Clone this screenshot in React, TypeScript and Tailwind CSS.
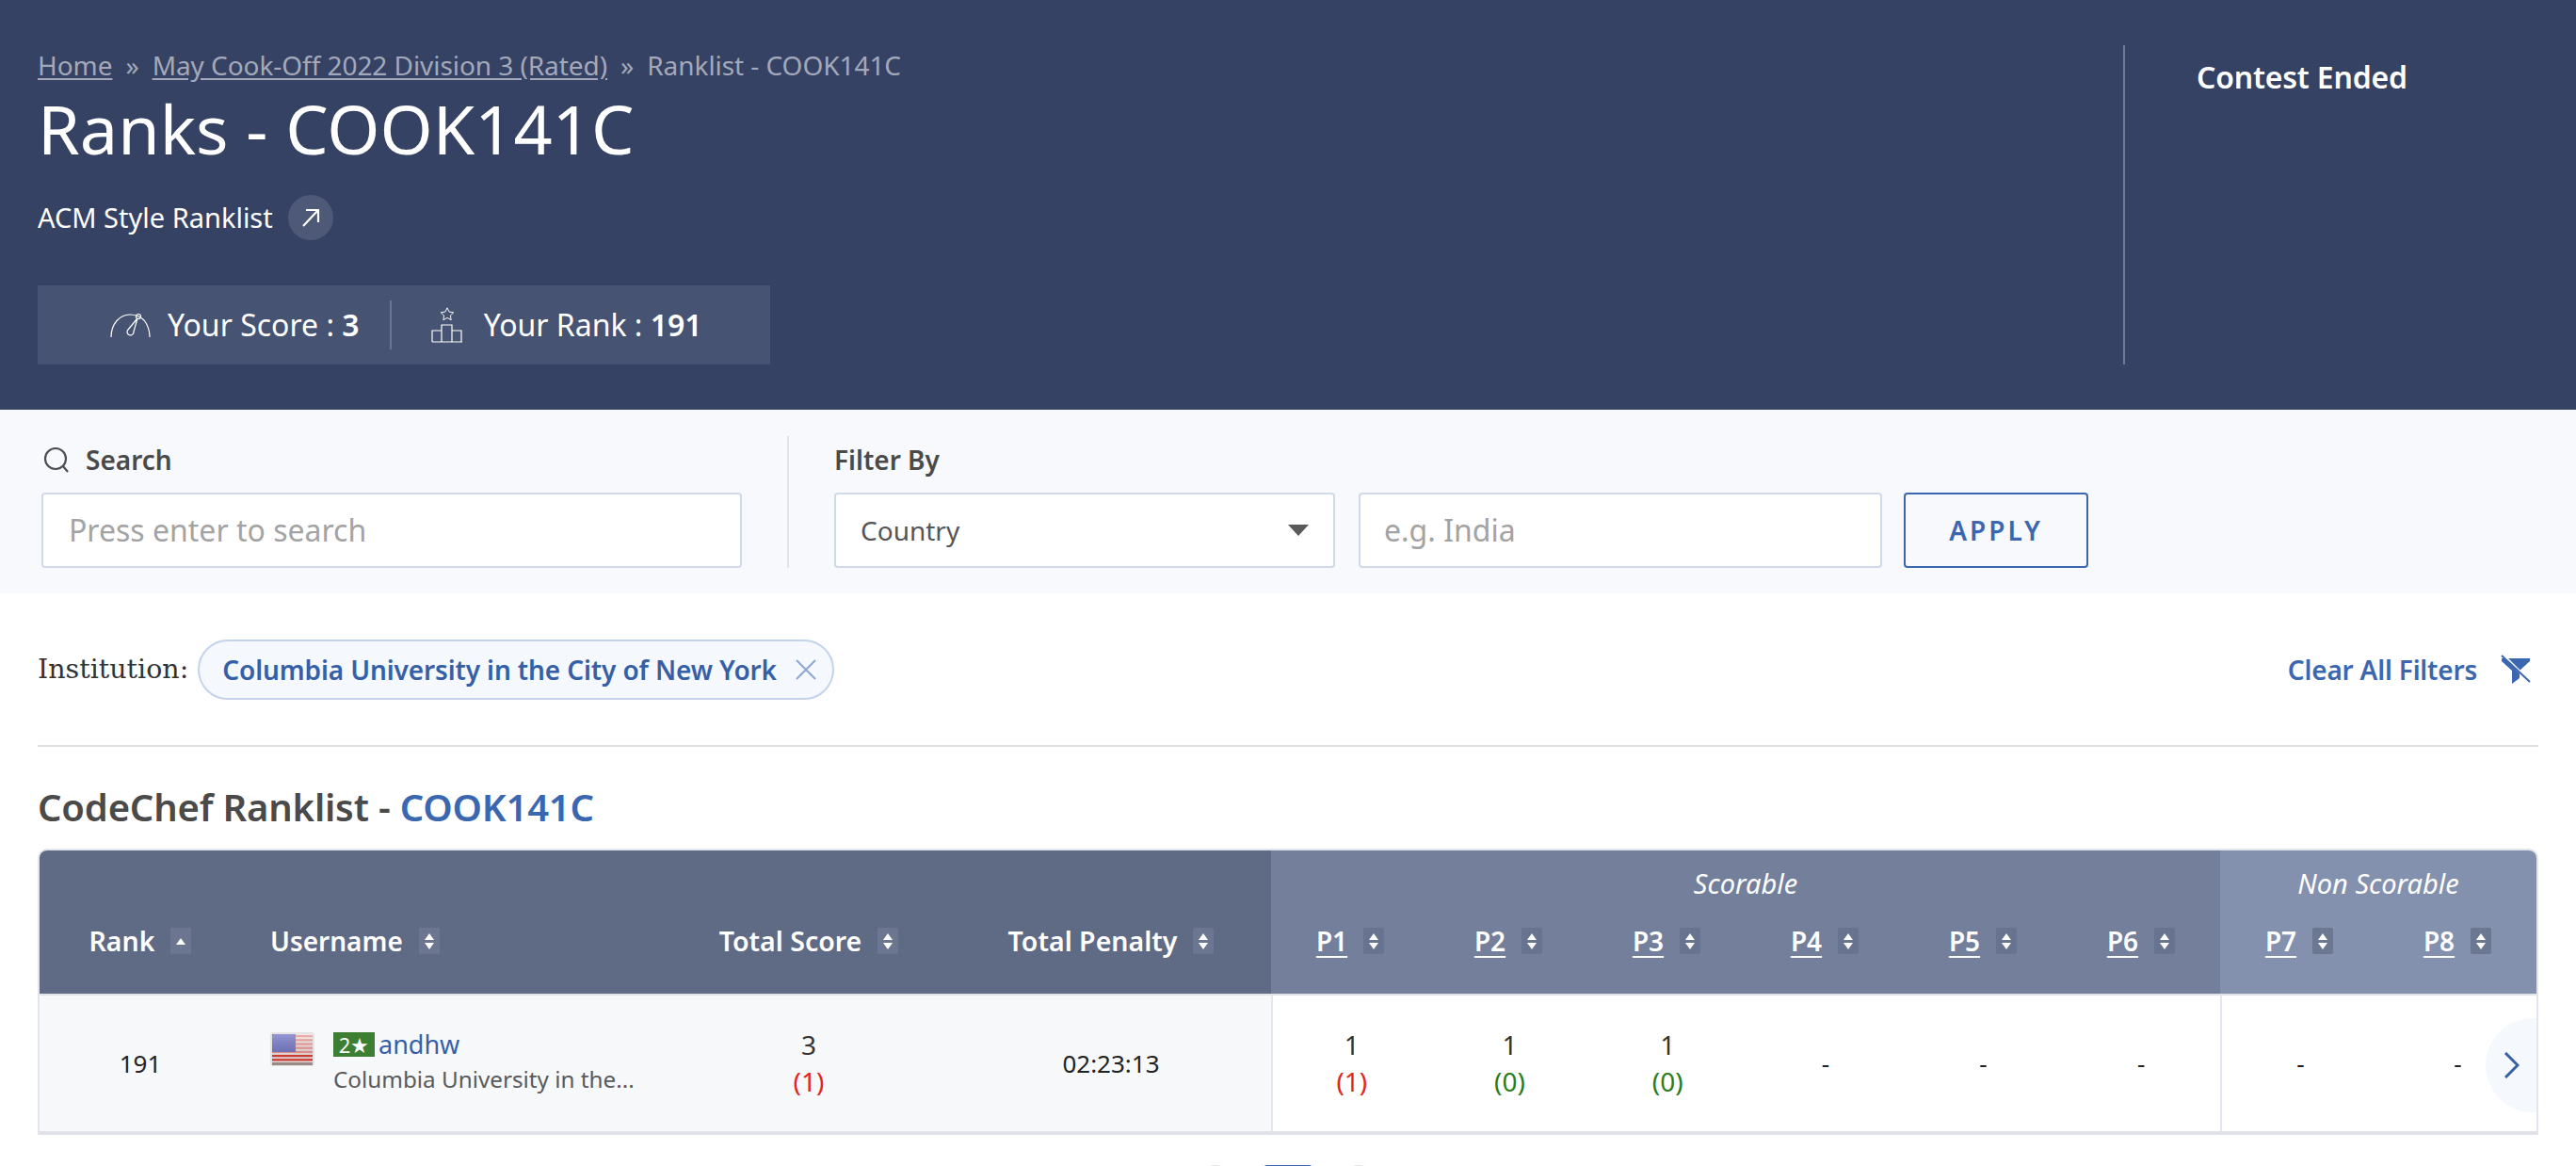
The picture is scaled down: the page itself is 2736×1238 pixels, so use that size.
import React from "react";

function Sort({ only, cls }: { only?: boolean; cls: string }) {
  return (
    <span className={`flex h-[28px] w-[22px] shrink-0 flex-col items-center justify-center gap-[3px] rounded-[2px] ${cls}`}>
      <svg width="10" height="7" viewBox="0 0 10 7" className="fill-white"><path d="M5 0 10 7H0Z" /></svg>
      {!only && <svg width="10" height="7" viewBox="0 0 10 7" className="fill-white"><path d="M5 7 0 0H10Z" /></svg>}
    </span>
  );
}

function MainHead({ label, only, cls }: { label: string; only?: boolean; cls: string }) {
  return (
    <div className={`flex items-center justify-center gap-[17px] text-[28.5px] font-semibold leading-[40px] text-white ${cls}`}>
      <span>{label}</span>
      <Sort only={only} cls="bg-[#6c7690]" />
    </div>
  );
}

function PHead({ label, box }: { label: string; box: string }) {
  return (
    <div className="flex w-[168px] items-center justify-center gap-[17px] text-[28px] font-semibold leading-[40px] text-white">
      <span className="underline decoration-2 underline-offset-[5px]">{label}</span>
      <Sort cls={box} />
    </div>
  );
}

function Cell({ top, bottom, color }: { top: string; bottom?: string; color?: string }) {
  return (
    <div className="flex w-[168px] flex-col items-center justify-center text-[28px] text-[#333]">
      {bottom ? (
        <>
          <span className="leading-[38px]">{top}</span>
          <span className={`leading-[40px] ${color}`}>{bottom}</span>
        </>
      ) : (
        <span className="text-[26px] text-[#222]">{top}</span>
      )}
    </div>
  );
}

function Flag() {
  const stripes = [0, 1, 2, 3, 4, 5, 6];
  return (
    <svg width="47" height="36" viewBox="0 0 47 36" className="shrink-0">
      <defs>
        <linearGradient id="g" x1="0" y1="0" x2="0" y2="1">
          <stop offset="0" stopColor="#fff" stopOpacity="0.25" />
          <stop offset="1" stopColor="#000" stopOpacity="0.08" />
        </linearGradient>
      </defs>
      <rect x="0" y="0" width="47" height="36" rx="3" fill="#e4e4e4" />
      <rect x="2" y="2" width="43" height="30" rx="2" fill="#f3e4e2" />
      {stripes.map((i) => (
        <rect key={i} x="2" y={3 + i * 4.2} width="43" height="2.2" fill={i > 4 ? "#dd3d33" : "#ee9590"} />
      ))}
      <rect x="2" y="2" width="25" height="19" fill="#7376c6" />
      <rect x="2" y="2" width="43" height="30" rx="2" fill="url(#g)" />
      <rect x="2" y="32" width="43" height="3" fill="#9a8a88" />
    </svg>
  );
}

export default function App() {
  return (
    <div className="h-[1238px] w-[2736px] overflow-hidden bg-white font-['Noto_Sans',sans-serif] text-[#333]">
      {/* hero */}
      <div className="flex h-[435px] bg-[#364263] pl-[40px] pt-[48px]">
        <div className="w-[2215px] shrink-0">
          <div className="flex h-[42px] items-center text-[28px] leading-[42px] tracking-[-0.06px] text-[#a3a9ba]">
            <span className="underline underline-offset-[3px]">Home</span>
            <span className="mx-[14px]">»</span>
            <span className="underline underline-offset-[3px]">May Cook-Off 2022 Division 3 (Rated)</span>
            <span className="mx-[14px]">»</span>
            <span>Ranklist - COOK141C</span>
          </div>
          <h1 className="text-[72px] leading-[92px] text-white">Ranks - COOK141C</h1>
          <div className="mt-[25px] flex h-[48px] items-center gap-[16px] text-[29px] text-white">
            <span>ACM Style Ranklist</span>
            <span className="flex h-[48px] w-[48px] items-center justify-center rounded-full bg-[#4d5977]">
              <svg width="24" height="24" viewBox="0 0 24 24" fill="none" stroke="white" strokeWidth="2.2"><path d="M4 21 20 4M7 4h13v13" /></svg>
            </span>
          </div>
          <div className="mt-[48px] flex h-[84px] w-[778px] items-center bg-[#475373] pl-[76px] text-[32px] text-white">
            <svg width="44" height="30" viewBox="0 0 44 30" fill="none" stroke="white" strokeWidth="1.2" className="mr-[18px]">
              <path d="M2 28C2 14 11 4 22 4c6 0 11 2 15 6 4 5 6 11 6 18" />
              <circle cx="31" cy="6" r="2.5" />
              <path d="M30 8 26 22a3.5 3.5 0 1 1-6-2Z" />
            </svg>
            <span>Your Score : <span className="font-semibold">3</span></span>
            <span className="ml-[32px] h-[52px] w-[2px] bg-[#6b7690]" />
            <svg width="34" height="38" viewBox="0 0 34 38" fill="none" stroke="white" strokeWidth="1.2" className="ml-[42px] mr-[22px]">
              <path d="M17 1l2.6 5.4 5.9.8-4.3 4.1 1 5.8-5.2-2.8-5.2 2.8 1-5.8-4.3-4.1 5.9-.8Z" transform="translate(3.4 0) scale(.8)" />
              <path d="M11 37V19h11v18M1 37V25h10M22 25h10v12M1 37h32" />
            </svg>
            <span>Your Rank : <span className="font-semibold">191</span></span>
          </div>
        </div>
        <div className="h-[339px] w-[2px] bg-[#6f7a94]" />
        <div className="pl-[76px] text-[32px] font-semibold leading-[68px] tracking-[-0.2px] text-white">Contest Ended</div>
      </div>

      {/* filters */}
      <div className="flex h-[195px] bg-[#f7f9fc] pl-[44px] pt-[33px]">
        <div className="w-[744px]">
          <div className="flex h-[40px] items-center gap-[17px] pl-[2px] text-[28px] font-semibold text-[#4a4a4a]">
            <svg width="28" height="28" viewBox="0 0 28 28" fill="none" stroke="#4f4f4f" strokeWidth="2.2"><circle cx="13" cy="13" r="11" /><path d="m21 21 5 6" /></svg>
            <span>Search</span>
          </div>
          <div className="mt-[15px] flex h-[80px] items-center rounded-[4px] border-2 border-[#d0d9e9] bg-white pl-[27px] text-[32px] text-[#a3a3a3]">Press enter to search</div>
        </div>
        <div className="-mt-[5px] ml-[48px] h-[140px] w-[2px] bg-[#dfe3ec]" />
        <div className="ml-[48px]">
          <div className="flex h-[40px] items-center text-[28px] font-semibold text-[#4a4a4a]">Filter By</div>
          <div className="mt-[15px] flex gap-[25px]">
            <div className="flex h-[80px] w-[532px] items-center justify-between rounded-[4px] border-2 border-[#d0d9e9] bg-white pl-[26px] pr-[26px] text-[28px] text-[#555]">
              <span>Country</span>
              <svg width="22" height="12" viewBox="0 0 22 12" className="fill-[#5a5a5a]"><path d="M0 0h22L11 12Z" /></svg>
            </div>
            <div className="flex h-[80px] w-[556px] items-center rounded-[4px] border-2 border-[#d0d9e9] bg-white pl-[25px] text-[32px] text-[#a3a3a3]">e.g. India</div>
            <div className="-ml-[2px] flex h-[80px] w-[196px] items-center justify-center rounded-[4px] border-2 border-[#3b67b0] bg-[#f7f9fc] text-[28px] font-semibold tracking-[3px] text-[#3b67b0]">APPLY</div>
          </div>
        </div>
      </div>

      {/* active filters */}
      <div className="mx-[40px] flex h-[163px] items-center justify-between border-b-2 border-[#e0e0e0] pt-[1px]">
        <div className="flex items-center gap-[10px]">
          <span className="font-['DejaVu_Serif',serif] text-[28.5px] text-[#333]">Institution:</span>
          <div className="flex h-[64px] items-center gap-[19px] rounded-full border-2 border-[#c3d3ec] bg-[#f5f9fe] pl-[24px] pr-[16px] text-[28px] font-semibold tracking-[-0.12px] text-[#3560a8]">
            <span>Columbia University in the City of New York</span>
            <svg width="24" height="24" viewBox="0 0 24 24" fill="none" stroke="#8ba6d2" strokeWidth="2"><path d="M2 2l20 20M22 2 2 22" /></svg>
          </div>
        </div>
        <div className="flex items-center gap-[25px] pr-[8px] text-[28px] font-semibold tracking-[-0.2px] text-[#3b67b0]">
          <span>Clear All Filters</span>
          <svg width="32" height="32" viewBox="0 0 32 32" className="fill-[#3b67b0]">
            <path d="M1 4h30v3L20 17v8l-8 6V17L1 7Z" />
            <path d="M2 0 32 30" stroke="white" strokeWidth="3" />
            <path d="M1 1 31 29" stroke="#3b67b0" strokeWidth="2" />
          </svg>
        </div>
      </div>

      {/* heading */}
      <h2 className="ml-[40px] mt-[37px] text-[40px] font-semibold leading-[54px] tracking-[-0.2px] text-[#4a4a4a]">
        CodeChef Ranklist - <span className="text-[#3b67b0]">COOK141C</span>
      </h2>

      {/* table */}
      <div className="relative mx-[40px] mt-[17px] h-[304px] overflow-hidden rounded-t-[10px] border-x-2 border-t-2 border-[#e2e5ee]">
        <div className="flex h-[152px] text-white">
          <div className="flex w-[1308px] items-center bg-[#5f6a84] pt-[40px]">
            <MainHead label="Rank" only cls="w-[214px]" />
            <div className="flex w-[452px] items-center gap-[17px] pl-[31px] text-[28px] font-semibold leading-[40px]">
              <span>Username</span>
              <Sort cls="bg-[#6c7690]" />
            </div>
            <MainHead label="Total Score" cls="w-[302px]" />
            <MainHead label="Total Penalty" cls="w-[340px]" />
          </div>
          <div className="flex w-[1008px] flex-col bg-[#747f9b]">
            <div className="pt-[15px] text-center text-[29px] italic leading-[40px]">Scorable</div>
            <div className="mt-[21px] flex">
              {["P1", "P2", "P3", "P4", "P5", "P6"].map((p) => (
                <PHead key={p} label={p} box="bg-[#687390]" />
              ))}
            </div>
          </div>
          <div className="flex w-[336px] flex-col bg-[#8491ae]">
            <div className="pt-[15px] text-center text-[29px] italic leading-[40px]">Non Scorable</div>
            <div className="mt-[21px] flex">
              {["P7", "P8"].map((p) => (
                <PHead key={p} label={p} box="bg-[#6c7892]" />
              ))}
            </div>
          </div>
        </div>
        <div className="flex h-[150px] border-y-2 border-b-[4px] border-t-[#dfe2e8] border-b-[#e0e2e8]">
          <div className="flex w-[1308px] items-center bg-[#f7f8fa]">
            <div className="w-[214px] text-center text-[26px] text-[#222]">191</div>
            <div className="flex w-[452px] gap-[20px] pl-[31px]">
              <Flag />
              <div className="min-w-0">
                <div className="flex items-center gap-[4px] leading-[26px]">
                  <span className="flex h-[26px] w-[44px] items-center justify-center bg-[#3d7f32] text-[22px] leading-none text-white">2★</span>
                  <span className="text-[27px] leading-[26px] text-[#3560a8]">andhw</span>
                </div>
                <div className="mt-[7px] whitespace-nowrap text-[24.25px] leading-[34px] text-[#5a5a5a]">Columbia University in the...</div>
              </div>
            </div>
            <div className="flex w-[302px] flex-col items-center text-[28px] text-[#333]">
              <span className="leading-[38px]">3</span>
              <span className="leading-[40px] text-[#e3261d]">(1)</span>
            </div>
            <div className="w-[340px] text-center text-[26px] text-[#222]">02:23:13</div>
          </div>
          <div className="flex w-[1008px] border-l-2 border-[#e4e7f0] bg-white">
            <Cell top="1" bottom="(1)" color="text-[#e3261d]" />
            <Cell top="1" bottom="(0)" color="text-[#2a7d1c]" />
            <Cell top="1" bottom="(0)" color="text-[#2a7d1c]" />
            <Cell top="-" />
            <Cell top="-" />
            <Cell top="-" />
          </div>
          <div className="flex w-[336px] border-l-2 border-[#e4e7f0] bg-white">
            <Cell top="-" />
            <Cell top="-" />
          </div>
        </div>
        <div className="absolute right-0 top-[178px] flex h-[100px] w-[54px] items-center overflow-hidden rounded-l-full bg-[#f5f9fe] pl-[20px]">
          <svg width="16" height="28" viewBox="0 0 16 28" fill="none" stroke="#3560a8" strokeWidth="3"><path d="M1 1l13 13L1 27" /></svg>
        </div>
      </div>

      {/* pagination */}
      <div className="ml-[1271px] mt-[32px] flex items-start gap-[29px]">
        <span className="h-[40px] w-[40px] rounded-full bg-[#e2e2e2]" />
        <span className="h-[56px] w-[56px] rounded-[6px] bg-[#3b67b0]" />
        <span className="-ml-[2px] h-[40px] w-[40px] rounded-full bg-[#e2e2e2]" />
      </div>
    </div>
  );
}
